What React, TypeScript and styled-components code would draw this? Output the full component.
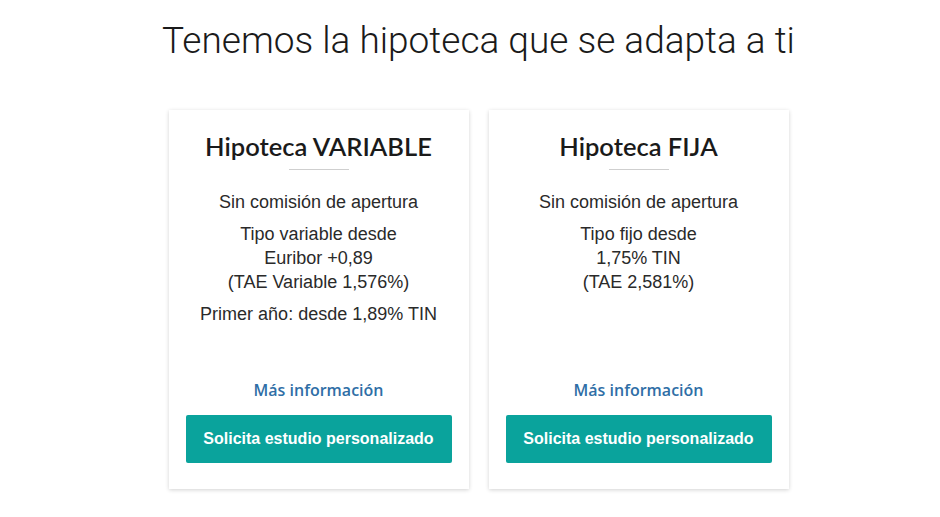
import React from "react";
import styled, { createGlobalStyle } from "styled-components";

const Global = createGlobalStyle`
  html, body { margin: 0; padding: 0; background: #ffffff; }
  body { font-family: "Liberation Sans", Arial, sans-serif; color: #333; }
`;

const Page = styled.div`
  width: 940px;
  height: 517px;
  display: flex;
  flex-direction: column;
  align-items: center;
  padding-left: 17px;
  box-sizing: border-box;
  overflow: hidden;
`;

const Heading = styled.h1`
  margin: 17px 0 0;
  font-family: Roboto, "Liberation Sans", sans-serif;
  font-weight: 300;
  font-size: 37px;
  line-height: 48px;
  color: #1a1a1a;
`;

const Cards = styled.div`
  margin-top: 45px;
  display: grid;
  grid-template-columns: 300px 300px;
  gap: 20px;
`;

const Card = styled.div`
  background: #fff;
  height: 379px;
  box-sizing: border-box;
  box-shadow: 0 1px 4px rgba(0, 0, 0, 0.18);
  display: flex;
  flex-direction: column;
  align-items: center;
  padding: 18px 17px 26px;
  text-align: center;
`;

const CardTitle = styled.h2`
  margin: 0;
  font-family: Lato, "Liberation Sans", sans-serif;
  font-weight: 600;
  font-size: 25.5px;
  line-height: 36px;
  color: #1a1a1a;
`;

const Divider = styled.div`
  width: 60px;
  height: 1px;
  background: #cfcfcf;
  margin: 5px 0 20px;
`;

const Para = styled.p`
  margin: 0 0 8px;
  font-size: 18px;
  line-height: 24px;
  color: #2a2a2a;
`;

const Bottom = styled.div`
  margin-top: auto;
  width: 100%;
  display: flex;
  flex-direction: column;
  align-items: center;
`;

const MoreLink = styled.a`
  font-family: "Open Sans", "Liberation Sans", sans-serif;
  font-weight: 600;
  font-size: 16px;
  line-height: 22px;
  color: #2f6ea6;
  text-decoration: none;
  margin-bottom: 14px;
`;

const CTA = styled.button`
  width: 266px;
  height: 48px;
  border: none;
  border-radius: 2px;
  background: #0aa39c;
  color: #fff;
  font-family: "Liberation Sans", Arial, sans-serif;
  font-weight: 700;
  font-size: 16px;
  cursor: pointer;
`;

type Offer = { title: string; paras: string[][] };

const offers: Offer[] = [
  {
    title: "Hipoteca VARIABLE",
    paras: [
      ["Sin comisión de apertura"],
      ["Tipo variable desde", "Euribor +0,89", "(TAE Variable 1,576%)"],
      ["Primer año: desde 1,89% TIN"],
    ],
  },
  {
    title: "Hipoteca FIJA",
    paras: [
      ["Sin comisión de apertura"],
      ["Tipo fijo desde", "1,75% TIN", "(TAE 2,581%)"],
    ],
  },
];

export default function App() {
  return (
    <>
      <Global />
      <Page>
        <Heading>Tenemos la hipoteca que se adapta a ti</Heading>
        <Cards>
          {offers.map((o) => (
            <Card key={o.title}>
              <CardTitle>{o.title}</CardTitle>
              <Divider />
              {o.paras.map((lines, i) => (
                <Para key={i}>
                  {lines.map((l, j) => (
                    <React.Fragment key={j}>
                      {j > 0 && <br />}
                      {l}
                    </React.Fragment>
                  ))}
                </Para>
              ))}
              <Bottom>
                <MoreLink href="#">Más información</MoreLink>
                <CTA>Solicita estudio personalizado</CTA>
              </Bottom>
            </Card>
          ))}
        </Cards>
      </Page>
    </>
  );
}
